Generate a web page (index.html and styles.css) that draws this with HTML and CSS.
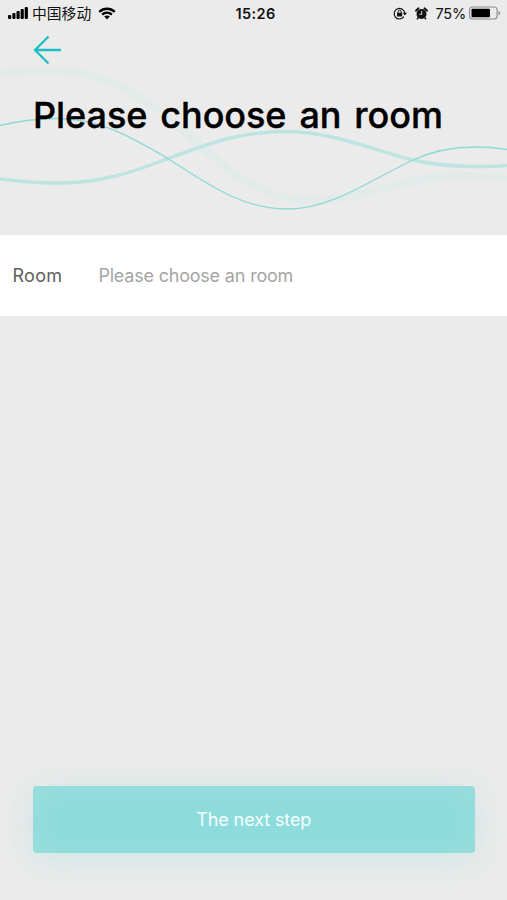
FILE: index.html
```html
<!DOCTYPE html>
<html lang="en">
<head>
<meta charset="utf-8">
<meta name="viewport" content="width=device-width, initial-scale=1">
<title>Please choose an room</title>
<link rel="stylesheet" href="styles.css">
</head>
<body>
<div class="screen">
  <header class="hero">
    <svg class="waves" viewBox="0 0 507 235" fill="none" aria-hidden="true">
      <path class="wave-soft" d="M0 74C20 71 35 70.500 55 70.500C95 71 125 88 150 104C180 124 215 165 254 186C275 197 295 201 315 200.500C365 199 400 177 460 176C480 176 495 177 507 179"/>
      <path class="wave-band" d="M0 179C20 181.500 38 183 58 183C97 183 125 175 167 159C210 143 240 131.500 287 131.500C335 132 375 151 413 160C435 165 455 166.500 475 166.500C488 166.500 498 166 507 165.500"/>
      <path class="wave-line" d="M0 125.500C19 121 37 118.500 57 118.500C95 119 122 131 167 158C205 182 240 209 287 209C332 209 370 180 413 160C435 150 455 147 475 147C488 147 498 148 507 149.500"/>
    </svg>
    <div class="status">
      <div class="status-left">
        <svg class="signal" width="21" height="13" viewBox="0 0 21 13" aria-hidden="true">
          <rect x="0" y="8" width="3.200" height="4" rx="1"/><rect x="4.300" y="6" width="3.200" height="6" rx="1"/><rect x="8.500" y="4" width="3.200" height="8" rx="1"/><rect x="12.600" y="2" width="3.200" height="10" rx="1"/><rect x="16.700" y="0" width="3.200" height="12" rx="1"/>
        </svg>
        <span class="carrier">中国移动</span>
        <svg class="wifi" width="18" height="13" viewBox="0 0 18 13" fill="none" aria-hidden="true">
          <path d="M1.200 4.800C5.700.700 12.300.700 16.800 4.800M4.100 7.700C7 5.100 11 5.100 13.900 7.700" stroke="#000" stroke-width="2.300"/><path d="M6.200 9.500C7.800 8.100 10.200 8.100 11.800 9.500L9 12.400Z" fill="#000"/>
        </svg>
      </div>
      <span class="time">15:26</span>
      <div class="status-right">
        <svg width="14" height="13" viewBox="0 0 14 13" fill="none" aria-hidden="true">
          <path d="M10.900 9.700A5.300 5.300 0 1 1 11.800 6.200" stroke="#111" stroke-width="1.200"/><path d="M9.800 5.800H14L11.900 8.600Z" fill="#111"/><rect x="4" y="5.700" width="5.200" height="3.900" rx=".5" fill="#111"/><path d="M5.100 6V4.700a1.500 1.500 0 0 1 3 0V6" stroke="#111"/>
        </svg>
        <svg class="alarm" width="13" height="13" viewBox="0 0 13 13" fill="none" aria-hidden="true">
          <circle cx="6.500" cy="7" r="5" fill="#111"/><path d="M.9 3.700L3.500 1.300M12.100 3.700L9.500 1.300" stroke="#111" stroke-width="1.900" stroke-linecap="round"/><path d="M3.200 10.700L2 12.200M9.800 10.700L11 12.200" stroke="#111" stroke-width="1.500"/><path d="M6.700 4V7.300H4.300" stroke="#ddd" stroke-width="1"/>
        </svg>
        <span class="percent">75%</span>
        <svg class="battery" width="32" height="14" viewBox="0 0 32 14" fill="none" aria-hidden="true">
          <rect x=".6" y="1" width="27.500" height="12" rx="3" stroke="#8c8c8c" stroke-width="1.100"/><rect x="2.500" y="2.800" width="18.500" height="8.400" rx="1" fill="#000"/><path d="M29.500 4.700C31.600 5.500 31.600 8.500 29.500 9.300Z" fill="#8c8c8c"/>
        </svg>
      </div>
    </div>
    <svg class="back" width="30" height="30" viewBox="0 0 30 30" fill="none" role="img" aria-label="Back">
      <path d="M15.500 1.500L2 15L15.500 28.500M2 15H28" stroke="#1dbfc5" stroke-width="2.300"/>
    </svg>
    <h1 class="title">Please choose an room</h1>
  </header>
  <div class="field">
    <span class="label">Room</span>
    <span class="placeholder">Please choose an room</span>
  </div>
  <footer class="footer">
    <button class="next" type="button"><span class="next-text">The next step</span></button>
  </footer>
</div>
</body>
</html>
```
FILE: styles.css
```css
* {
  box-sizing: border-box;
}

body {
  margin: 0;
  background: #ebebeb;
  font-family: Inter, "Noto Sans CJK SC", sans-serif;
}

.screen {
  display: flex;
  flex-direction: column;
  height: 900px;
  overflow: hidden;
}

.hero {
  position: relative;
  height: 235px;
}

.waves {
  position: absolute;
  inset: 0;
  width: 507px;
  height: 235px;
  z-index: -1;
}

.wave-soft {
  stroke: #e2ebe9;
  stroke-width: 8;
}

.wave-band {
  stroke: #bde4e3;
  stroke-width: 3.4;
}

.wave-line {
  stroke: #8dd8d8;
  stroke-width: 1.3;
}

.status {
  display: grid;
  grid-template-columns: 1fr auto 1fr;
  align-items: center;
  height: 27px;
  padding: 0 6px 0 8px;
  font-size: 14.5px;
  color: #111;
}

.status-left,
.status-right {
  display: flex;
  align-items: center;
}

.status-right {
  justify-content: flex-end;
}

.carrier {
  margin: -1px 0 0 3px;
  font-family: "Noto Sans CJK SC", sans-serif;
  font-size: 14.8px;
  line-height: 20px;
}

.wifi {
  margin: -1px 0 0 7px;
}

.time {
  padding-left: 2px;
  font-weight: 600;
  letter-spacing: 0.4px;
}

.alarm {
  margin-left: 8px;
}

.percent {
  margin-left: 7px;
  letter-spacing: -0.2px;
}

.battery {
  margin: -1px 0 0 3px;
}

.back {
  display: block;
  margin: 8px 0 0 33px;
}

.title {
  margin: 28px 0 0 33px;
  font-size: 36px;
  font-weight: 500;
  line-height: 44px;
  letter-spacing: -0.05px;
  word-spacing: 3.4px;
  white-space: nowrap;
  color: #000;
  -webkit-text-stroke: 0.4px #000;
}

.field {
  display: flex;
  align-items: center;
  height: 81px;
  padding-left: 12.5px;
  background: #fff;
  font-size: 18px;
}

.label {
  width: 86px;
  letter-spacing: 0.3px;
  color: #606060;
}

.placeholder {
  letter-spacing: -0.25px;
  word-spacing: 0.3px;
  color: #a5a5a5;
}

.footer {
  margin-top: auto;
  padding: 0 32.5px 47.5px 33px;
}

.next {
  display: block;
  width: 100%;
  height: 67px;
  border: 0;
  border-radius: 4px;
  background: #8edcdd;
  box-shadow: 0 6px 32px rgba(142, 220, 215, 0.3), inset 0 3px 30px rgba(174, 224, 219, 0.5);
  font: 400 18px Inter, sans-serif;
  letter-spacing: -0.1px;
  color: #f4ffff;
}
```
